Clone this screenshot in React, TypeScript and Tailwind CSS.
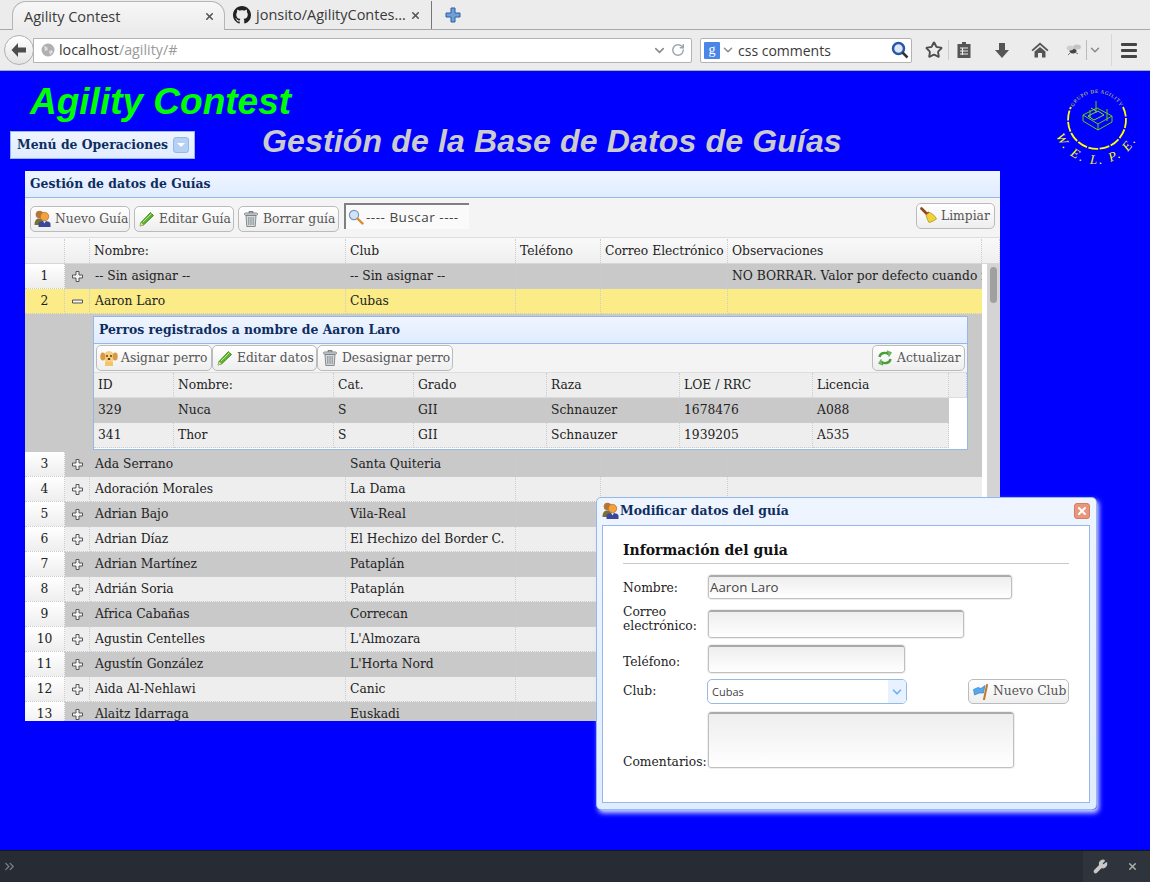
import { ChevronDown, RotateCw, Star, ChevronsRight, Wrench, X } from "lucide-react";

// Guide rows shown in the main grid
const guides = [
  { n: 1, name: "-- Sin asignar --", club: "-- Sin asignar --", obs: "NO BORRAR. Valor por defecto cuando no" },
  { n: 2, name: "Aaron Laro", club: "Cubas", open: true },
  { n: 3, name: "Ada Serrano", club: "Santa Quiteria" },
  { n: 4, name: "Adoración Morales", club: "La Dama" },
  { n: 5, name: "Adrian Bajo", club: "Vila-Real" },
  { n: 6, name: "Adrian Díaz", club: "El Hechizo del Border C." },
  { n: 7, name: "Adrian Martínez", club: "Pataplán" },
  { n: 8, name: "Adrián Soria", club: "Pataplán" },
  { n: 9, name: "Africa Cabañas", club: "Correcan" },
  { n: 10, name: "Agustin Centelles", club: "L'Almozara" },
  { n: 11, name: "Agustín González", club: "L'Horta Nord" },
  { n: 12, name: "Aida Al-Nehlawi", club: "Canic" },
  { n: 13, name: "Alaitz Idarraga", club: "Euskadi" },
];

const dogs = [
  { id: "329", name: "Nuca", cat: "S", grade: "GII", breed: "Schnauzer", loe: "1678476", lic: "A088" },
  { id: "341", name: "Thor", cat: "S", grade: "GII", breed: "Schnauzer", loe: "1939205", lic: "A535" },
];

const UsersIcon = () => (
  <svg width="18" height="18" viewBox="0 0 18 18" className="shrink-0">
    <circle cx="5.500" cy="4.500" r="3.800" fill="#b5763a" />
    <path d="M0.500 15c0-5 2-6.500 5-6.500s4 2 4 6.500z" fill="#77703a" />
    <circle cx="10.500" cy="6.500" r="4.200" fill="#f2a23e" stroke="#b96a1e" strokeWidth="0.700" />
    <path d="M4.500 17v-3c0-2 2.500-3 6-3s6 1 6 3v3z" fill="#3b4796" />
    <path d="M9 11l1.500 2.500 1.500-2.500z" fill="#cfe0ff" />
  </svg>
);

const PencilIcon = () => (
  <svg width="16" height="16" viewBox="0 0 16 16" className="shrink-0">
    <path d="M2 11.500L11.500 1.500l3 3L4.500 14 1 15z" fill="#5fb52e" stroke="#2f7a12" strokeWidth="0.800" />
    <path d="M1 15l1-3.500 2.500 2.500z" fill="#e8d9a0" />
    <path d="M4 11L12.500 2.500" stroke="#b9e68a" strokeWidth="1" />
  </svg>
);

const TrashIcon = () => (
  <svg width="16" height="18" viewBox="0 0 16 18" className="shrink-0">
    <path d="M6 1.500h4v1.500H6z" fill="none" stroke="#6d7478" strokeWidth="0.900" />
    <rect x="1.500" y="3" width="13" height="2.200" rx="1" fill="#d6dadc" stroke="#6d7478" strokeWidth="0.800" />
    <path d="M3 5.500h10l-0.800 11H3.800z" fill="#d4d9db" stroke="#6d7478" strokeWidth="0.800" />
    <path d="M5.800 7v8M8 7v8M10.200 7v8" stroke="#7c8487" strokeWidth="0.900" />
  </svg>
);

const SearchIcon = () => (
  <svg width="16" height="16" viewBox="0 0 16 16" className="shrink-0">
    <circle cx="6" cy="6" r="4.600" fill="#cfe4fb" stroke="#7a97b5" strokeWidth="1.200" />
    <path d="M9.500 9.500L14.500 14.500" stroke="#d98b2b" strokeWidth="2.400" strokeLinecap="round" />
  </svg>
);

const BroomIcon = () => (
  <svg width="18" height="18" viewBox="0 0 18 18" className="shrink-0">
    <path d="M1.500 1.500L7 7" stroke="#8a4a16" strokeWidth="2.600" strokeLinecap="round" />
    <path d="M5.500 6.500l3-2 0.800 1.200-3 2z" fill="#c33" />
    <path d="M6 8l3.500-2.500c3 1 5.500 3.500 7 6.500-2 1.500-5 3-7.500 3.500C7.500 13 6.500 10.500 6 8z" fill="#efd335" stroke="#a98a14" strokeWidth="0.700" />
  </svg>
);

const DogIcon = () => (
  <svg width="18" height="18" viewBox="0 0 18 18" className="shrink-0">
    <ellipse cx="9" cy="8" rx="5.500" ry="6" fill="#f4cf7f" />
    <ellipse cx="2.800" cy="7.500" rx="2.500" ry="4" fill="#d99a45" />
    <ellipse cx="15.200" cy="7.500" rx="2.500" ry="4" fill="#d99a45" />
    <path d="M5 13h8v4H5z" fill="#f3c46b" />
    <circle cx="7" cy="7" r="0.900" fill="#4a2c10" />
    <circle cx="11" cy="7" r="0.900" fill="#4a2c10" />
    <ellipse cx="9" cy="10" rx="1.300" ry="1" fill="#4a2c10" />
  </svg>
);

const RefreshIcon = () => (
  <svg width="16" height="16" viewBox="0 0 16 16" className="shrink-0" fill="none">
    <path d="M2.500 7C3 3.500 7.500 1.500 11.500 4" stroke="#4a9e3a" strokeWidth="2.400" />
    <path d="M10 0.800l4.500 1.800-2.500 4z" fill="#6cc15a" stroke="#3c8a2e" strokeWidth="0.500" />
    <path d="M13.500 9C13 12.500 8.500 14.500 4.500 12" stroke="#4a9e3a" strokeWidth="2.400" />
    <path d="M6 15.200l-4.500-1.800 2.500-4z" fill="#6cc15a" stroke="#3c8a2e" strokeWidth="0.500" />
  </svg>
);

const FlagIcon = () => (
  <svg width="16" height="16" viewBox="0 0 16 16" className="shrink-0">
    <path d="M0.500 5.500L5 3.500 8 4.500 12 1.500 10.500 9 6.500 9 1.500 11z" fill="#54a9f0" stroke="#2a74b8" strokeWidth="0.600" />
    <path d="M14 1L11 15.500" stroke="#c07a26" strokeWidth="2" strokeLinecap="round" />
  </svg>
);

const PlusIcon = () => (
  <svg width="11" height="11" viewBox="0 0 11 11">
    <path d="M4 0.500h3v3.500h3.500v3H7v3.500H4V7H0.500V4H4z" fill="#f4f4f4" stroke="#555" strokeWidth="1" />
  </svg>
);

const MinusIcon = () => (
  <svg width="11" height="11" viewBox="0 0 11 11">
    <path d="M0.500 4h10v3H0.500z" fill="#f4f4f4" stroke="#555" strokeWidth="1" />
  </svg>
);

const ToolButton = ({ icon, label, width }: { icon: React.ReactNode; label: string; width: string }) => (
  <button className={`${width} h-[26px] shrink-0 flex items-center gap-[3px] pl-[3px] rounded-[5px] border border-[#bbbbbb] bg-gradient-to-b from-[#ffffff] to-[#eeeeee] text-[#555555] text-[12.300px] whitespace-nowrap`}>
    <span className="w-[18px] flex justify-center">{icon}</span>
    <span>{label}</span>
  </button>
);

const TextBox = ({ width, height, value }: { width: string; height: string; value?: string }) => (
  <div className={`${width} ${height} shrink-0 rounded-[3px] border border-[#c0c0c0] border-t-[#aaaaaa] border-t-2 outline outline-1 outline-[#eeeeee] bg-gradient-to-b from-[#eeeeee] to-[#ffffff] px-[1px] flex items-center text-[13.300px] text-[#444444] font-['Open_Sans',sans-serif]`}>
    {value}
  </div>
);

const BrowserChrome = () => (
  <header className="h-[71px] shrink-0 bg-[#ececec] font-['Open_Sans',sans-serif] text-[#3a3a3a] border-b border-[#a9a9a9]">
    <div className="h-[30px] flex items-end border-b border-[#a9a9a9] relative">
      <div className="ml-[12px] w-[213px] h-[29px] -mb-px z-10 flex items-center pl-[11px] pr-[9px] rounded-t-[14px] border border-b-0 border-[#b5b5b5] bg-gradient-to-b from-[#f7f7f7] to-[#ececec]">
        <span className="flex-1 text-[14.500px] pt-[2px]">Agility Contest</span>
        <X size={11} strokeWidth={3.500} className="text-[#555555]" />
      </div>
      <div className="w-[207px] h-[28px] flex items-center pl-[8px] pr-[10px] border-r border-[#777777]">
        <svg width="18" height="18" viewBox="0 0 16 16" fill="#222222" className="shrink-0">
          <path d="M8 0C3.580 0 0 3.580 0 8c0 3.540 2.290 6.530 5.470 7.590.4.070.55-.17.55-.38 0-.19-.01-.82-.01-1.490-2.010.37-2.530-.49-2.690-.94-.09-.23-.48-.94-.82-1.130-.28-.15-.68-.52-.01-.53.630-.01 1.080.58 1.230.82.720 1.210 1.870.87 2.330.66.070-.52.280-.87.510-1.070-1.780-.2-3.640-.89-3.640-3.950 0-.87.310-1.590.820-2.150-.08-.2-.36-1.020.08-2.120 0 0 .670-.21 2.200.82.640-.18 1.320-.27 2-.27s1.360.09 2 .27c1.530-1.040 2.200-.82 2.200-.82.440 1.100.160 1.920.080 2.120.510.560.820 1.270.820 2.150 0 3.070-1.870 3.750-3.650 3.950.290.250.540.730.540 1.480 0 1.070-.01 1.930-.01 2.200 0 .210.150.460.550.380A8.010 8.010 0 0 0 16 8c0-4.420-3.580-8-8-8z" />
        </svg>
        <span className="flex-1 ml-[5px] text-[14.500px] whitespace-nowrap">jonsito/AgilityContes...</span>
        <X size={11} strokeWidth={3.500} className="text-[#555555]" />
      </div>
      <svg width="16" height="16" viewBox="0 0 16 16" className="ml-[13px] mb-[6px]">
        <path d="M6 1h4v5h5v4h-5v5H6v-5H1V6h5z" fill="#6f9fd8" stroke="#2c5f9e" strokeWidth="1" />
      </svg>
    </div>
    <div className="h-[40px] flex items-center relative">
      <div className="ml-[4px] w-[30px] h-[30px] rounded-full bg-gradient-to-b from-[#ffffff] to-[#e4e4e4] border border-[#b0b0b0] z-10 flex items-center justify-center">
        <svg width="18" height="16" viewBox="0 0 18 16">
          <path d="M8 1L1.500 8 8 15V10.500h8v-5H8z" fill="#4d4d4d" />
        </svg>
      </div>
      <div className="-ml-[1px] w-[659px] h-[25px] flex items-center bg-[#ffffff] border border-[#b3b3b3] rounded-r-[2px] pl-[7px] pr-[3px]">
        <svg width="14" height="14" viewBox="0 0 14 14" className="mr-[4px]">
          <circle cx="7" cy="7" r="6.500" fill="#b0b0b0" />
          <path d="M3 3l3 1 1 3-3 1zM8 8l3-1 1 2-3 3z" fill="#dddddd" />
        </svg>
        <span className="flex-1 text-[14.300px]">
          localhost<span className="text-[#9a9a9a]">/agility/#</span>
        </span>
        <ChevronDown size={15} strokeWidth={2.500} className="text-[#8a8a8a] mr-[4px]" />
        <RotateCw size={14} strokeWidth={2.500} className="text-[#9aa5ad] mr-[3px]" />
      </div>
      <div className="ml-[8px] w-[212px] h-[25px] flex items-center bg-[#ffffff] border border-[#b3b3b3] rounded-[2px] pl-[3px] pr-[2px]">
        <div className="w-[16px] h-[17px] rounded-[1px] bg-[#4a86e8] text-[#ffffff] text-[14px] leading-[16px] text-center font-['Liberation_Serif',serif]">g</div>
        <ChevronDown size={14} strokeWidth={2.500} className="text-[#8a8a8a] ml-[1px]" />
        <span className="flex-1 ml-[3px] text-[14px]">css comments</span>
        <svg width="18" height="18" viewBox="0 0 18 18">
          <circle cx="7.500" cy="7.500" r="5.500" fill="#dbe8fa" stroke="#2b55a8" strokeWidth="2.500" />
          <path d="M11.500 11.500L16.500 16.500" stroke="#333333" strokeWidth="2.500" />
        </svg>
      </div>
      <Star size={18} strokeWidth={2.500} className="ml-[13px] text-[#4d4d4d]" />
      <div className="ml-[5px] w-px h-[20px] bg-[#cccccc]" />
      <svg width="16" height="18" viewBox="0 0 16 18" className="ml-[7px]">
        <path d="M6 1h4v2h4.500v14h-13V3H6z" fill="#555555" />
        <path d="M4 7h8M4 10h8M4 13h8M6.500 7v7" stroke="#ececec" strokeWidth="1.200" />
      </svg>
      <svg width="16" height="17" viewBox="0 0 16 17" className="ml-[22px]">
        <path d="M5 1h6v7h4l-7 8-7-8h4z" fill="#555555" />
      </svg>
      <svg width="18" height="16" viewBox="0 0 18 16" className="ml-[21px]">
        <path d="M9 0.500L0.500 8l1.200 1.200L9 3l7.300 6.200L17.500 8z" fill="#555555" />
        <path d="M3.500 9.500L9 5l5.500 4.500V15.500h-3.500V11h-4v4.500H3.500z" fill="#555555" />
      </svg>
      <svg width="18" height="16" viewBox="0 0 18 16" className="ml-[16px]">
        <ellipse cx="8" cy="9" rx="3.500" ry="2.500" fill="#444444" />
        <ellipse cx="12" cy="5" rx="4" ry="2.500" fill="#c4c4c4" />
        <ellipse cx="5" cy="6" rx="3.500" ry="2.500" fill="#cfcfcf" />
        <path d="M3 13l3-3M13 12l-3-2" stroke="#777777" strokeWidth="1" />
      </svg>
      <div className="ml-[3px] w-px h-[20px] bg-[#bbbbbb]" />
      <ChevronDown size={14} strokeWidth={2.500} className="ml-[1px] text-[#8a8a8a]" />
      <div className="ml-[9px] w-px h-[32px] bg-[#d8d8d8]" />
      <div className="ml-[9px] w-[16px] flex flex-col gap-[3px]">
        <div className="h-[3px] rounded-[1px] bg-[#444444]" />
        <div className="h-[3px] rounded-[1px] bg-[#444444]" />
        <div className="h-[3px] rounded-[1px] bg-[#444444]" />
      </div>
    </div>
  </header>
);

const ClubLogo = () => (
  <svg width="100" height="100" viewBox="0 0 100 100" className="shrink-0 mt-[6px]">
    <defs>
      <path id="arcTop" d="M23.300 30A27 27 0 0 1 70.700 30" />
      <path id="arcBottom" d="M3 43a44 44 0 0 0 88 0" />
    </defs>
    <path d="M73 30A29 29 0 1 1 21 30" fill="none" stroke="#ffff00" strokeWidth="1.800" strokeDasharray="10 1.500" />
    <text fontSize="5" fill="#e0f000" fontFamily="'Liberation Serif', serif" letterSpacing="0.700">
      <textPath href="#arcTop">GRUPO DE AGILITY</textPath>
    </text>
    <text fontSize="13" fill="#ffff00" fontStyle="italic" fontFamily="'Liberation Serif', serif" letterSpacing="2.400">
      <textPath href="#arcBottom" startOffset="12%">W. E. L. P. E.</textPath>
    </text>
    <g fill="none" stroke="#66cc00" strokeWidth="1">
      <path d="M33 38l15 9 14-8-15-8zM33 38v6l15 9 14-8v-6M48 47v6M40 33v8M46 24v12M57 32v12" />
      <path d="M38 39l10-5 6 4-10 5zM41 31l5 3" stroke="#88dd22" />
    </g>
  </svg>
);

const GuideRow = ({ g, i }: { g: (typeof guides)[number]; i: number }) => {
  const bg = g.open ? "bg-[#fbec88]" : i % 2 === 0 ? "bg-[#c9c9c9]" : "bg-[#eeeeee]";
  return (
    <div className={`grid grid-cols-[40px_25px_256px_170px_85px_127px_254px] h-[25px] text-[12.300px] ${bg}`}>
      <div className={`h-[25px] flex items-center justify-center border-r border-b border-dotted border-[#cccccc] ${g.open ? "bg-[#fbec88]" : "bg-gradient-to-b from-[#ffffff] to-[#eeeeee]"}`}>{g.n}</div>
      <div className="h-[25px] flex items-center justify-center border-r border-b border-dotted border-[#cccccc]">
        {g.open ? <MinusIcon /> : <PlusIcon />}
      </div>
      <div className="h-[25px] flex items-center pl-[5px] border-r border-b border-dotted border-[#cccccc]">{g.name}</div>
      <div className="h-[25px] flex items-center pl-[4px] border-r border-b border-dotted border-[#cccccc] whitespace-nowrap">{g.club}</div>
      <div className="h-[25px] border-r border-b border-dotted border-[#cccccc]" />
      <div className="h-[25px] border-r border-b border-dotted border-[#cccccc]" />
      <div className="h-[25px] flex items-center pl-[4px] border-b border-dotted border-[#cccccc] whitespace-nowrap overflow-hidden">{g.obs}</div>
    </div>
  );
};

const DogPanel = () => (
  <div className="h-[138px] bg-[#c9c9c9] pl-[68px] pt-[2px]">
    <div className="w-[875px] h-[134px] border border-[#95b8e7] bg-[#ffffff]">
      <div className="h-[27px] flex items-center pl-[5px] border-b border-[#95b8e7] bg-gradient-to-b from-[#eff5ff] to-[#e0ecff] text-[12.400px] font-bold text-[#0e2d5f]">
        Perros registrados a nombre de Aaron Laro
      </div>
      <div className="h-[29px] flex items-center pl-[2px] pr-[2px] bg-[#f4f4f4] border-b border-[#dddddd]">
        <ToolButton icon={<DogIcon />} label="Asignar perro" width="w-[116px]" />
        <ToolButton icon={<PencilIcon />} label="Editar datos" width="w-[105px]" />
        <ToolButton icon={<TrashIcon />} label="Desasignar perro" width="w-[136px]" />
        <div className="flex-1" />
        <ToolButton icon={<RefreshIcon />} label="Actualizar" width="w-[93px]" />
      </div>
      <div className="grid grid-cols-[80px_160px_80px_133px_133px_133px_136px_18px] h-[25px] bg-[#eeeeee] text-[12.300px] border-b border-[#dddddd]">
        {["ID", "Nombre:", "Cat.", "Grado", "Raza", "LOE / RRC", "Licencia", ""].map((h) => (
          <div key={h} className="flex items-center pl-[4px] border-r border-dotted border-[#cccccc]">{h}</div>
        ))}
      </div>
      {dogs.map((d, i) => (
        <div key={d.id} className="grid grid-cols-[80px_160px_80px_133px_133px_133px_136px_18px] h-[25px] text-[12.300px]">
          {[d.id, d.name, d.cat, d.grade, d.breed, d.loe, d.lic].map((v, j) => (
            <div key={j} className={`flex items-center pl-[4px] border-r border-b border-dotted border-[#cccccc] ${i === 0 ? "bg-[#c9c9c9]" : "bg-[#eeeeee]"}`}>{v}</div>
          ))}
          <div className="bg-[#ffffff]" />
        </div>
      ))}
    </div>
  </div>
);

const GuideWindow = () => (
  <div className="absolute left-[596px] top-[497px] w-[501px] h-[313px] rounded-[5px] border border-[#95b8e7] bg-gradient-to-b from-[#eff5ff] to-[#e0ecff] shadow-[2px_3px_5px_#cfd8ff] pl-[5px] pr-[6px] pb-[6px] flex flex-col">
    <div className="h-[27px] shrink-0 flex items-center justify-between pb-[1px]">
      <div className="flex items-center text-[12.400px] font-bold text-[#0e2d5f]">
        <UsersIcon />
        <span>Modificar datos del guía</span>
      </div>
      <div className="w-[16px] h-[16px] rounded-[3px] bg-[#e9967a] border border-[#cf7f62] flex items-center justify-center">
        <X size={12} strokeWidth={4} className="text-[#ffffff]" />
      </div>
    </div>
    <div className="flex-1 bg-[#ffffff] border border-[#95b8e7] pl-[20px] pt-[13px] text-[12.300px] text-[#222222]">
      <div className="w-[446px] h-[25px] border-b border-[#c8c8c8] text-[14px] font-bold text-[#111111] leading-[22px]">Información del guia</div>
      <div className="flex items-center mt-[11px]">
        <div className="w-[85px] pt-[2px]">Nombre:</div>
        <TextBox width="w-[304px]" height="h-[24px]" value="Aaron Laro" />
      </div>
      <div className="flex items-center mt-[11px]">
        <div className="w-[85px] leading-[14px] -mt-[10px]">Correo<br />electrónico:</div>
        <TextBox width="w-[256px]" height="h-[28px]" />
      </div>
      <div className="flex items-center mt-[7px]">
        <div className="w-[85px] pt-[6px]">Teléfono:</div>
        <TextBox width="w-[197px]" height="h-[28px]" />
      </div>
      <div className="flex items-center mt-[6px] w-[446px]">
        <div className="w-[84px]">Club:</div>
        <div className="w-[200px] h-[25px] rounded-[5px] border border-[#95b8e7] flex overflow-hidden">
          <span className="flex-1 pl-[4px] pt-[1px] flex items-center text-[11px] text-[#444444] font-['Open_Sans',sans-serif]">Cubas</span>
          <div className="w-[18px] bg-[#e8f1ff] flex items-center justify-center">
            <ChevronDown size={14} strokeWidth={3} className="text-[#6cb2f5]" />
          </div>
        </div>
        <div className="flex-1" />
        <button className="w-[101px] h-[25px] flex items-center gap-[3px] pl-[3px] rounded-[5px] border border-[#bbbbbb] bg-gradient-to-b from-[#ffffff] to-[#eeeeee] text-[#555555] text-[12.300px] whitespace-nowrap">
          <span className="w-[18px] flex justify-center"><FlagIcon /></span>
          <span>Nuevo Club</span>
        </button>
      </div>
      <div className="flex items-end mt-[8px]">
        <div className="w-[85px] leading-[14px] -mb-[1px]">Comentarios:</div>
        <TextBox width="w-[306px]" height="h-[56px]" />
      </div>
    </div>
  </div>
);

export default function App() {
  return (
    <div className="relative w-[1150px] h-[882px] overflow-hidden flex flex-col bg-[#0000ff] font-['DejaVu_Serif',serif] text-[#222222]">
      <BrowserChrome />

      <main className="flex-1 min-h-0">
        <div className="h-[100px] flex justify-between">
          <div>
            <h1 className="ml-[30px] mt-[10px] h-[42px] text-[37px] leading-[42px] font-bold italic text-[#00ff00] font-['Liberation_Sans',sans-serif]">Agility Contest</h1>
            <div className="flex items-start ml-[10px] mt-[8px]">
              <div className="w-[185px] h-[28px] flex items-center justify-between pl-[6px] pr-[5px] border border-[#95b8e7] bg-gradient-to-b from-[#eff5ff] to-[#e0ecff] text-[12.400px] font-bold text-[#0e2d5f] whitespace-nowrap">
                Menú de Operaciones
                <div className="w-[16px] h-[16px] rounded-[3px] border border-[#95b8e7] bg-[#b5d0f5] flex items-center justify-center">
                  <div className="w-0 h-0 border-x-[4px] border-x-transparent border-t-[4px] border-t-[#ffffff]" />
                </div>
              </div>
              <h2 className="ml-[67px] -mt-[9px] text-[32px] leading-[38px] font-bold italic text-[#cccccc] tracking-[0.150px] whitespace-nowrap font-['Liberation_Sans',sans-serif]">Gestión de la Base de Datos de Guías</h2>
            </div>
          </div>
          <ClubLogo />
        </div>

        <section className="ml-[25px] w-[975px] h-[550px] overflow-hidden bg-[#ffffff]">
          <div className="h-[27px] flex items-center pl-[5px] border-b border-[#95b8e7] bg-gradient-to-b from-[#eff5ff] to-[#e0ecff] text-[12.400px] font-bold text-[#0e2d5f]">
            Gestión de datos de Guías
          </div>
          <div className="h-[40px] flex items-start bg-[#f4f4f4] border-b border-[#dddddd] pl-[5px] pr-[5px]">
            <div className="mt-[8px] flex gap-[4px]">
              <ToolButton icon={<UsersIcon />} label="Nuevo Guía" width="w-[100px]" />
              <ToolButton icon={<PencilIcon />} label="Editar Guía" width="w-[100px]" />
              <ToolButton icon={<TrashIcon />} label="Borrar guía" width="w-[101px]" />
            </div>
            <div className="ml-[5px] mt-[5px] w-[125px] h-[26px] flex items-center gap-[2px] pl-[2px] border-l-2 border-t-2 border-[#808080] bg-[#fafafa] text-[13.500px] tracking-[0.500px] text-[#444444] font-['Open_Sans',sans-serif] whitespace-nowrap">
              <SearchIcon />
              ---- Buscar ----
            </div>
            <div className="flex-1" />
            <div className="mt-[5px]">
              <ToolButton icon={<BroomIcon />} label="Limpiar" width="w-[79px]" />
            </div>
          </div>
          <div className="grid grid-cols-[40px_25px_256px_170px_85px_127px_254px_18px] h-[26px] pt-[1px] bg-gradient-to-b from-[#f9f9f9] to-[#efefef] text-[12.300px] border-b border-[#d8d8d8]">
            {["", " ", "Nombre:", "Club", "Teléfono", "Correo Electrónico", "Observaciones", "  "].map((h) => (
              <div key={h} className="flex items-center pl-[4px] whitespace-nowrap border-r border-dotted border-[#cccccc]">{h}</div>
            ))}
          </div>
          <div className="flex">
            <div className="w-[957px] shrink-0">
              {guides.map((g, i) => (
                <div key={g.n}>
                  <GuideRow g={g} i={i} />
                  {g.open && <DogPanel />}
                </div>
              ))}
            </div>
            <div className="w-[5px] shrink-0 bg-[#ffffff]" />
            <div className="w-[13px] shrink-0 h-[460px] bg-[#d4d4d4] pt-[3px] pl-[3px]">
              <div className="w-[7px] h-[36px] rounded-[4px] bg-[#a0a0a0]" />
            </div>
          </div>
        </section>
      </main>

      <footer className="h-[32px] shrink-0 flex items-center justify-between bg-[#272c34] border-t border-[#14171b]">
        <ChevronsRight size={15} className="ml-[2px] text-[#7c8288]" />
        <div className="w-[67px] h-full flex items-center bg-[#2f343c]">
          <Wrench size={15} fill="#c8c8c8" className="ml-[10px] text-[#c8c8c8]" />
          <X size={11} strokeWidth={3} className="ml-[19px] text-[#b0b0b0]" />
        </div>
      </footer>

      <GuideWindow />
    </div>
  );
}
